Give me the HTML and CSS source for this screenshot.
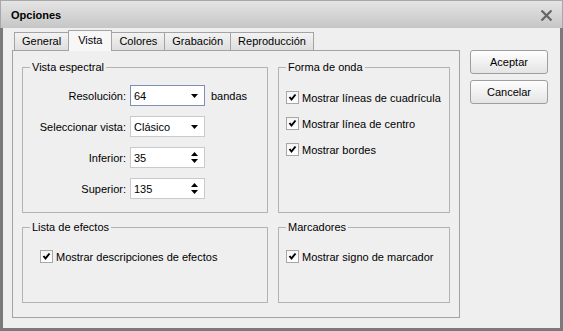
FILE: index.html
```html
<!DOCTYPE html>
<html lang="es">
<head>
    <meta charset="UTF-8">
    <title>Opciones</title>
    <link rel="stylesheet" href="styles.css">
</head>
<body>
    <div class="window">
        <div class="titlebar">
            <span class="title">Opciones</span>
            <svg class="close" width="13" height="11" viewBox="0 0 13 11">
                <path d="M1.5 0.5 L11.5 10.5 M11.5 0.5 L1.5 10.5" stroke="#666" stroke-width="2.2" fill="none"/>
            </svg>
        </div>

        <div class="body">
            <div class="tabs-area">
                <div class="tabs">
                    <div class="tab">General</div>
                    <div class="tab active">Vista</div>
                    <div class="tab">Colores</div>
                    <div class="tab">Grabación</div>
                    <div class="tab">Reproducción</div>
                </div>

                <div class="panel">
                    <fieldset class="group">
                        <legend>Vista espectral</legend>
                        <div class="form">
                            <label>Resolución:</label>
                            <div class="combo focus">
                                <span>64</span>
                                <svg class="arrow" width="7" height="4" viewBox="0 0 7 4"><polygon points="0,0 7,0 3.5,4" fill="#000"/></svg>
                            </div>
                            <span class="unit">bandas</span>

                            <label>Seleccionar vista:</label>
                            <div class="combo">
                                <span>Clásico</span>
                                <svg class="arrow" width="7" height="4" viewBox="0 0 7 4"><polygon points="0,0 7,0 3.5,4" fill="#000"/></svg>
                            </div>
                            <span></span>

                            <label>Inferior:</label>
                            <div class="combo">
                                <span>35</span>
                                <svg class="spin" width="7" height="11" viewBox="0 0 7 11"><polygon points="3.5,0 7,4 0,4" fill="#000"/><polygon points="0,7 7,7 3.5,11" fill="#000"/></svg>
                            </div>
                            <span></span>

                            <label>Superior:</label>
                            <div class="combo">
                                <span>135</span>
                                <svg class="spin" width="7" height="11" viewBox="0 0 7 11"><polygon points="3.5,0 7,4 0,4" fill="#000"/><polygon points="0,7 7,7 3.5,11" fill="#000"/></svg>
                            </div>
                            <span></span>
                        </div>
                    </fieldset>

                    <fieldset class="group">
                        <legend>Forma de onda</legend>
                        <div class="checks">
                            <div class="check-row"><span class="check"><svg width="11" height="11" viewBox="0 0 11 11"><path d="M2.5 5 L4.5 7.5 L8.5 2.5" stroke="#000" stroke-width="2" fill="none"/></svg></span>Mostrar líneas de cuadrícula</div>
                            <div class="check-row"><span class="check"><svg width="11" height="11" viewBox="0 0 11 11"><path d="M2.5 5 L4.5 7.5 L8.5 2.5" stroke="#000" stroke-width="2" fill="none"/></svg></span>Mostrar línea de centro</div>
                            <div class="check-row"><span class="check"><svg width="11" height="11" viewBox="0 0 11 11"><path d="M2.5 5 L4.5 7.5 L8.5 2.5" stroke="#000" stroke-width="2" fill="none"/></svg></span>Mostrar bordes</div>
                        </div>
                    </fieldset>

                    <fieldset class="group">
                        <legend>Lista de efectos</legend>
                        <div class="checks wide">
                            <div class="check-row"><span class="check"><svg width="11" height="11" viewBox="0 0 11 11"><path d="M2.5 5 L4.5 7.5 L8.5 2.5" stroke="#000" stroke-width="2" fill="none"/></svg></span>Mostrar descripciones de efectos</div>
                        </div>
                    </fieldset>

                    <fieldset class="group">
                        <legend>Marcadores</legend>
                        <div class="checks single">
                            <div class="check-row"><span class="check"><svg width="11" height="11" viewBox="0 0 11 11"><path d="M2.5 5 L4.5 7.5 L8.5 2.5" stroke="#000" stroke-width="2" fill="none"/></svg></span>Mostrar signo de marcador</div>
                        </div>
                    </fieldset>
                </div><!-- panel -->
            </div><!-- tabs-area -->

            <div class="buttons">
                <button class="btn">Aceptar</button>
                <button class="btn">Cancelar</button>
            </div>
        </div><!-- body -->
    </div><!-- window -->
</body>
</html>
```

FILE: styles.css
```css
*{margin: 0;padding: 0;box-sizing: border-box;}
html, body{
    width: 100%;
    height: 100%;
}

body{
    background: #fff;
    font-family: "Liberation Sans", Arial, sans-serif;
    font-size: 11px;
    color: #000;
}

.window{
    width: 563px;
    height: 331px;
    background: #efefef;
    border: 3px solid #7a7a7a;
    border-top: 0;
    display: flex;
    flex-direction: column;
}

/* barra de titulo */
.titlebar{
    height: 28px;
    flex: none;
    margin: 0 -3px;
    padding: 0 9px 0 10px;
    display: flex;
    align-items: center;
    justify-content: space-between;
    background: linear-gradient(#e4e4e4, #c6c6c6);
    border-top: 1px solid #a8a8a8;
    border-left: 1px solid #a8a8a8;
    border-right: 1px solid #a8a8a8;
}

.title{
    font-weight: bold;
    padding-top: 1px;
}

.close{
    margin-top: 1px;
}

.body{
    flex: 1;
    display: flex;
    gap: 10px;
    padding: 2px 0 0 9px;
}

.tabs-area{
    width: 448px;
    flex: none;
}

/* pestañas */
.tabs{
    height: 20px;
    display: flex;
    align-items: flex-end;
    padding-left: 2px;
}

.tab{
    height: 18px;
    line-height: 17px;
    padding: 0 7px;
    border: 1px solid #a3a3a3;
    border-bottom: 0;
    margin-right: -1px;
    background: linear-gradient(#f3f3f3, #dedede);
}

.tab.active{
    height: 21px;
    margin-bottom: -1px;
    padding: 0 9px;
    line-height: 19px;
    background: #f7f7f7;
    position: relative;
    z-index: 1;
}

.panel{
    height: 268px;
    border: 1px solid #a3a3a3;
    padding: 10px 9px 15px 9px;
    display: grid;
    grid-template-columns: 246px 172px;
    grid-template-rows: 152px 82px;
    column-gap: 10px;
    row-gap: 8px;
}

/* grupos */
.group{
    border: 1px solid #b3b3b3;
    min-width: 0;
    padding: 0;
}

.group legend{
    margin-left: 7px;
    padding: 0 2px;
    line-height: 13px;
}

.form{
    margin-top: 11px;
    display: grid;
    grid-template-columns: 103px 75px auto;
    grid-auto-rows: 21px;
    column-gap: 4px;
    row-gap: 10px;
    align-items: center;
}

.form label{
    text-align: right;
}

.unit{
    padding-left: 2px;
}

.combo{
    height: 21px;
    display: flex;
    align-items: center;
    justify-content: space-between;
    padding: 0 6px 0 3px;
    background: #fff;
    border: 1px solid #cacaca;
}

.combo.focus{
    border-color: #7d8fb5;
}

.checks{
    margin-top: 17px;
    padding-left: 7px;
    display: flex;
    flex-direction: column;
    gap: 13px;
}

.checks.wide{
    margin-top: 16px;
    padding-left: 17px;
}

.checks.single{
    margin-top: 16px;
}

.check-row{
    display: flex;
    align-items: center;
    gap: 3px;
    height: 13px;
}

.check{
    width: 13px;
    height: 13px;
    flex: none;
    border: 1px solid #a7a7a7;
    background: linear-gradient(#f4f4f4, #fff);
    display: flex;
    align-items: center;
    justify-content: center;
}

/* botones */
.buttons{
    width: 78px;
    margin-top: 20px;
    display: flex;
    flex-direction: column;
    gap: 6px;
}

.btn{
    height: 24px;
    font-family: inherit;
    font-size: 11px;
    color: #000;
    border: 1px solid #9e9e9e;
    border-radius: 3px;
    background: linear-gradient(#fefefe, #e4e4e4);
}
```
